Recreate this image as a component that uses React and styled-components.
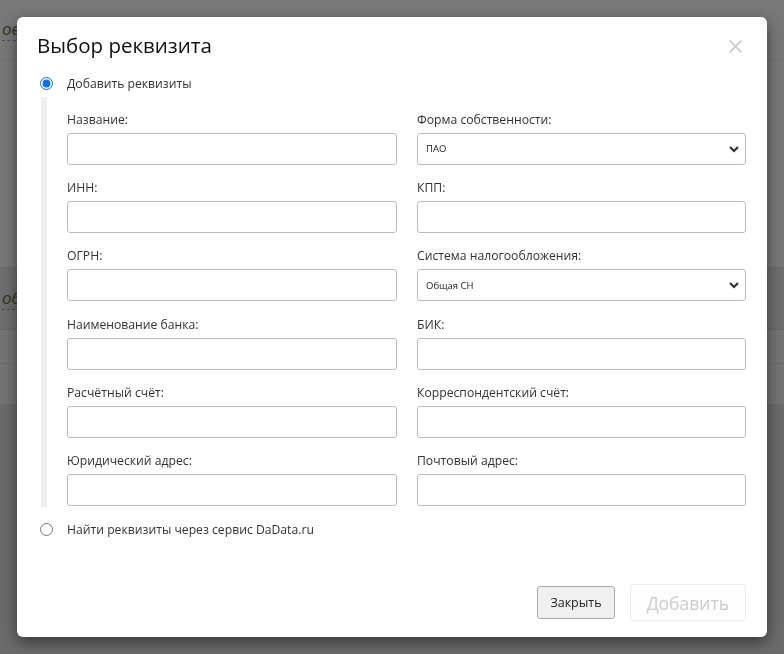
import styled, { createGlobalStyle } from 'styled-components';

const GlobalStyle = createGlobalStyle`
    html, body {
        margin: 0;
        padding: 0;
        height: 100%;
        overflow: hidden;
    }
    body {
        font-family: "Open Sans", "Noto Sans", sans-serif;
        color: #333;
    }
    * {
        box-sizing: border-box;
    }
`

const Page = styled.div`
    height: 100vh;
    background-color: #eeeeee;
    display: flex;
    flex-direction: column;
`

const PageRow = styled.div`
    height: ${props => props.h}px;
    background-color: ${props => props.bg || '#eeeeee'};
    border-bottom: 1px solid ${props => props.line || 'transparent'};
    display: flex;
    align-items: center;
    padding-left: 2px;
`

const PageLink = styled.span`
    font-family: "Open Sans", sans-serif;
    font-style: italic;
    font-size: 17px;
    color: #666644;
    border-bottom: 1px dashed #999;
`

const Backdrop = styled.div`
    position: fixed;
    inset: 0;
    background-color: rgba(0, 0, 0, 0.5);
`

const Modal = styled.div`
    position: fixed;
    top: 17px;
    left: 17px;
    width: 750px;
    height: 620px;
    background-color: #fff;
    border-radius: 6px;
    box-shadow: 0 5px 15px rgba(0, 0, 0, 0.5);
    display: flex;
    flex-direction: column;
    padding: 0 21px 16px 20px;
`

const Header = styled.div`
    display: flex;
    justify-content: space-between;
    align-items: center;
    height: 58px;
`

const Title = styled.h4`
    margin: 0 0 2px;
    font-size: 20.5px;
    font-weight: 400;
    color: #111;
`

const Close = styled.button`
    border: none;
    background: none;
    padding: 0;
    margin-right: 3px;
    width: 15px;
    height: 15px;
    display: flex;
    cursor: pointer;
`

const Body = styled.div`
    flex: 1;
    display: flex;
    flex-direction: column;
`

const Option = styled.label`
    display: flex;
    align-items: center;
    gap: 14px;
    font-size: 12.2px;
    color: #333;
    height: 16px;
    margin-top: ${props => props.top || 0}px;
`

const Radio = styled.input`
    margin: 0 0 0 3px;
    width: 13px;
    height: 13px;
    accent-color: #0a6ef0;
`

const Group = styled.div`
    margin: 6px 0 0 4px;
    border-left: 6px solid #eeeeee;
    padding: 13.5px 0 1px 20px;
    display: grid;
    grid-template-columns: 330px 329px;
    column-gap: 20px;
    row-gap: 14.4px;
`

const Field = styled.div`
    display: flex;
    flex-direction: column;
    gap: 4px;
`

const Label = styled.div`
    font-size: 12.2px;
    line-height: 18px;
    color: #333;
`

const Input = styled.input`
    height: 32px;
    border: 1px solid #bdbdbd;
    border-radius: 3px;
    padding: 0 10px;
    font-family: inherit;
    font-size: 12px;
`

const SelectBox = styled.div`
    position: relative;
    height: 32px;
    display: flex;
    align-items: center;
`

const Select = styled.select`
    appearance: none;
    width: 100%;
    height: 100%;
    border: 1px solid #bdbdbd;
    border-radius: 3px;
    background: #fff;
    padding: 0 0 0 8px;
    font-family: inherit;
    font-size: 9.5px;
    color: #222;
`

const Chevron = styled.svg`
    position: absolute;
    right: 6px;
    top: 12px;
    pointer-events: none;
`

const Footer = styled.div`
    display: flex;
    justify-content: flex-end;
    align-items: center;
    gap: 14.5px;
`

const Button = styled.button`
    font-family: inherit;
    height: ${props => props.big ? 37 : 33}px;
    padding: 0 ${props => props.big ? 16 : 12.5}px;
    font-size: ${props => props.big ? 17.5 : 12.5}px;
    color: ${props => props.disabled ? '#cccccc' : '#222'};
    background-color: ${props => props.disabled ? '#fdfdfd' : '#f0f0f0'};
    border: 1px solid ${props => props.disabled ? '#ececec' : '#a9a9a9'};
    border-radius: 3px;
`

const fields = [
    ['Название:', null],
    ['Форма собственности:', 'ПАО'],
    ['ИНН:', null],
    ['КПП:', null],
    ['ОГРН:', null],
    ['Система налогообложения:', 'Общая СН'],
    ['Наименование банка:', null],
    ['БИК:', null],
    ['Расчётный счёт:', null],
    ['Корреспондентский счёт:', null],
    ['Юридический адрес:', null],
    ['Почтовый адрес:', null],
]

const App = () => {
    return (
        <>
            <GlobalStyle />
            <Page>
                <PageRow h={60} bg="#f1f1f1" line="#e2e2e2">
                    <PageLink>ов</PageLink>
                </PageRow>
                <PageRow h={207} bg="#f0f0f0" />
                <PageRow h={63} bg="#dddddd" line="#d0d0d0">
                    <PageLink>обо</PageLink>
                </PageRow>
                <PageRow h={35} bg="#e8e8e8" line="#d6d6d6" />
                <PageRow h={40} bg="#e8e8e8" />
                <PageRow h={250} bg="#d6d6d6" />
            </Page>
            <Backdrop />
            <Modal>
                <Header>
                    <Title>Выбор реквизита</Title>
                    <Close>
                        <svg width="15" height="15" viewBox="0 0 15 15">
                            <path d="M1.5 1.5 L13.5 13.5 M13.5 1.5 L1.5 13.5" stroke="#c2c5cc" strokeWidth="1.6" fill="none" />
                        </svg>
                    </Close>
                </Header>
                <Body>
                    <Option>
                        <Radio type="radio" name="mode" defaultChecked />
                        Добавить реквизиты
                    </Option>
                    <Group>
                        {fields.map(([label, value]) => (
                            <Field key={label}>
                                <Label>{label}</Label>
                                {value ? (
                                    <SelectBox>
                                        <Select defaultValue={value}>
                                            <option>{value}</option>
                                        </Select>
                                        <Chevron width="12" height="8" viewBox="0 0 12 8">
                                            <path d="M2 2 L6 6 L10 2" stroke="#333" strokeWidth="2.2" fill="none" />
                                        </Chevron>
                                    </SelectBox>
                                ) : (
                                    <Input />
                                )}
                            </Field>
                        ))}
                    </Group>
                    <Option top={14}>
                        <Radio type="radio" name="mode" />
                        Найти реквизиты через сервис DaData.ru
                    </Option>
                </Body>
                <Footer>
                    <Button>Закрыть</Button>
                    <Button big disabled>Добавить</Button>
                </Footer>
            </Modal>
        </>
    )
}

export default App;
